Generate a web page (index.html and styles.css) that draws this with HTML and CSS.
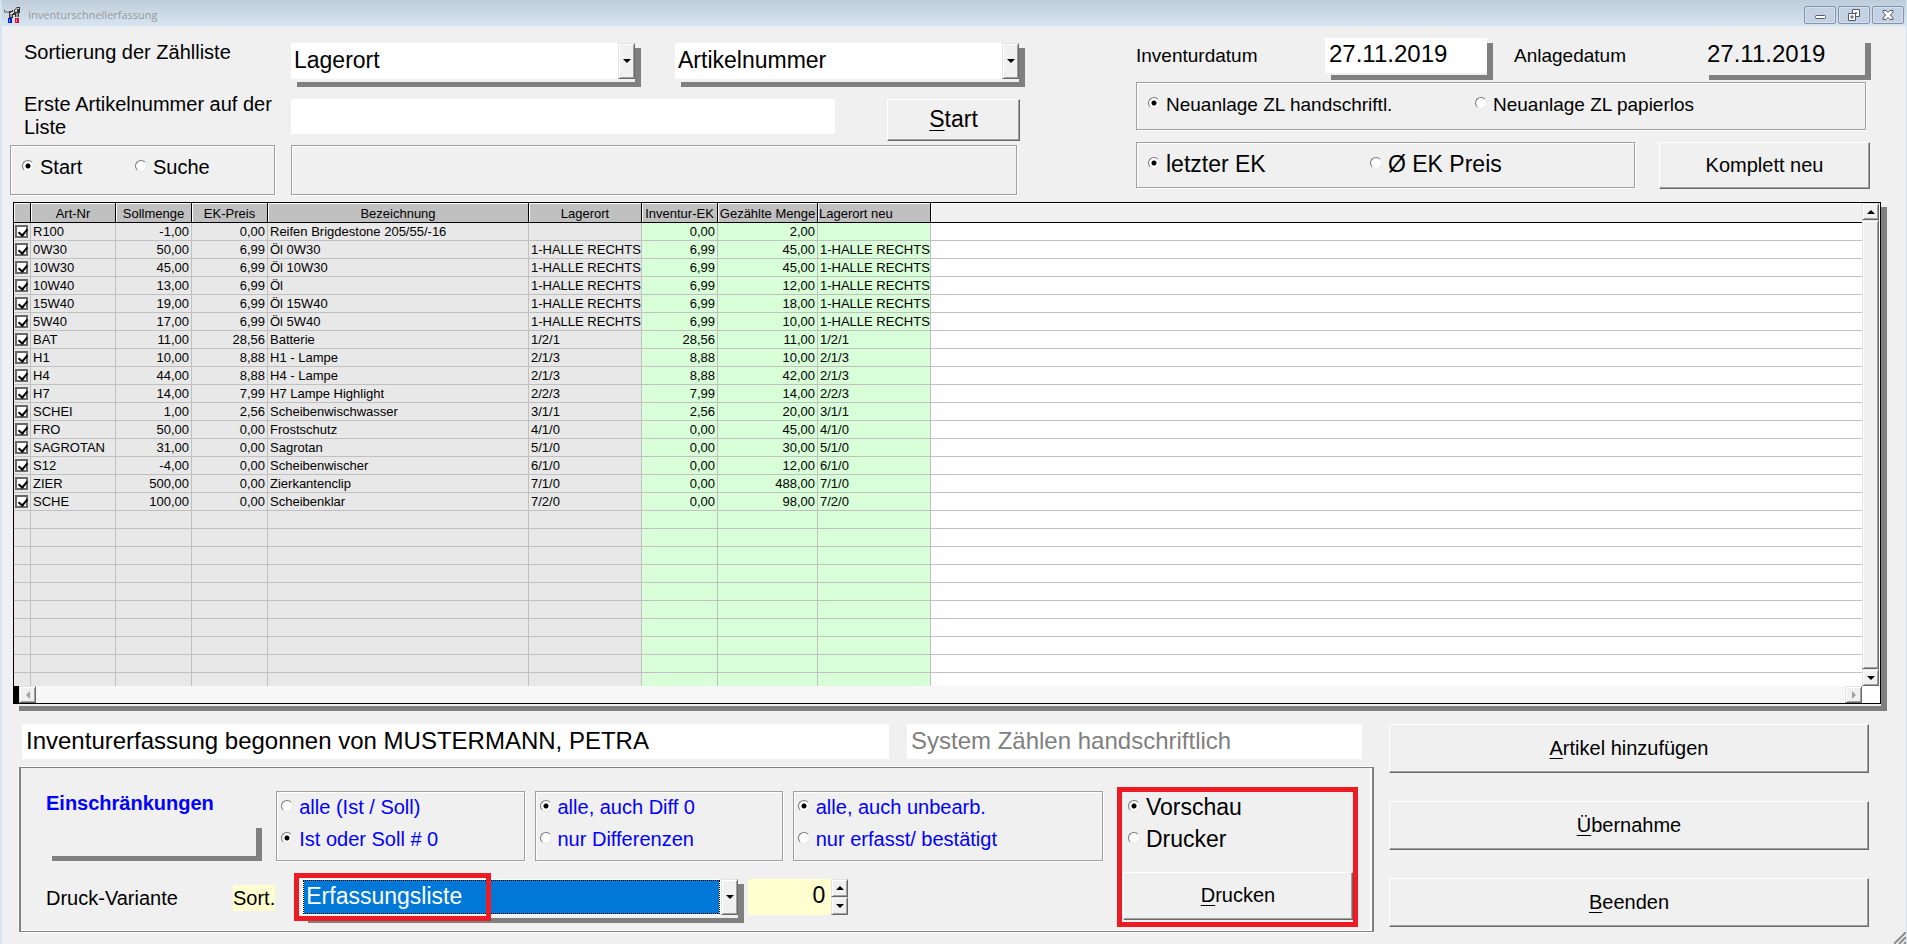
FILE: index.html
```html
<!DOCTYPE html>
<html lang="de">
<head>
<meta charset="utf-8">
<title>Inventurschnellerfassung</title>
<link rel="stylesheet" href="styles.css">
</head>
<body>
<div class="window">
  <header class="titlebar">
    <svg class="app-icon" viewBox="0 0 16 16" width="16" height="16" aria-hidden="true">
      <path d="M0 3h9v2H7v1h3V3l3-3h3v6h-1v4h-4V8H9v3H5V6H0z" fill="#333"/>
      <path d="M1 3h7v1H1zM6 6h3v1H6zM11 3l2-2h2v1h-2v3h-2z" fill="#d4d4d4"/>
      <path d="M0 4h5v2H0zM6 7h2v3H6zM12 6h2v4h-2z" fill="#9a9a9a"/>
      <path d="M4 11h4v5H4z" fill="#0a1bd0"/><path d="M5 12h1v3H5z" fill="#3fa0ff"/>
      <path d="M11 11h4v5h-4z" fill="#e0122a"/><path d="M12 12h1v3h-1z" fill="#ff7f9a"/>
    </svg>
    <h1 class="title">Inventurschnellerfassung</h1>
    <div class="window-buttons">
      <button class="window-button" type="button" aria-label="Minimieren">
        <svg viewBox="0 0 12 12" width="12" height="12"><rect x="1.500" y="6.500" width="10" height="3" rx="1" fill="#fff" stroke="#535666"/></svg>
      </button>
      <button class="window-button" type="button" aria-label="Wiederherstellen">
        <svg viewBox="0 0 12 12" width="12" height="12"><g fill="#fff" stroke="#535666"><path d="M4.500.500h7v7h-7z"/><path d="M7.500 3.500h1v1h-1z"/><path d="M.500 4.500h7v7h-7z"/><path d="M3 7h2v2H3z"/></g></svg>
      </button>
      <button class="window-button" type="button" aria-label="Schließen">
        <svg viewBox="0 0 12 12" width="12" height="12"><path d="M1 1.500h3l2 2 2-2h3v1.500l-2.500 3 2.500 3v1.500H8l-2-2-2 2H1V9l2.500-3L1 3z" fill="#fff" stroke="#535666"/></svg>
      </button>
    </div>
  </header>

  <main class="content">
    <section class="top">
      <div class="top-left">
        <div class="sort-row">
          <label class="caption" for="sort1">Sortierung der Zählliste</label>
          <div class="combo shadowed">
            <select class="combo-field" id="sort1"><option>Lagerort</option></select>
            <span class="combo-arrow" aria-hidden="true"><i class="arrow-down"></i></span>
          </div>
          <div class="combo shadowed">
            <select class="combo-field" id="sort2" aria-label="Zweite Sortierung"><option>Artikelnummer</option></select>
            <span class="combo-arrow" aria-hidden="true"><i class="arrow-down"></i></span>
          </div>
        </div>
        <div class="first-row">
          <label class="caption" for="first">Erste Artikelnummer auf der Liste</label>
          <input class="first-input" id="first" type="text">
          <button class="button start-button" type="button"><span><u>S</u>tart</span></button>
        </div>
        <div class="mode-row">
          <div class="group mode-group" role="radiogroup" aria-label="Modus">
            <label class="radio"><input type="radio" name="mode" checked>Start</label>
            <label class="radio"><input type="radio" name="mode">Suche</label>
          </div>
          <div class="group result-group"></div>
        </div>
      </div>

      <div class="top-right">
        <div class="date-row">
          <label class="date-caption" for="invdate">Inventurdatum</label>
          <div class="date shadowed"><input class="date-input" id="invdate" type="text" value="27.11.2019"></div>
          <label class="date-caption second" for="newdate">Anlagedatum</label>
          <div class="date shadowed"><input class="date-input flat" id="newdate" type="text" value="27.11.2019" readonly></div>
        </div>
        <div class="group create-group" role="radiogroup" aria-label="Neuanlage">
          <label class="radio"><input type="radio" name="create" checked>Neuanlage ZL handschriftl.</label>
          <label class="radio"><input type="radio" name="create">Neuanlage ZL papierlos</label>
        </div>
        <div class="price-row">
          <div class="group price-group" role="radiogroup" aria-label="Preis">
            <label class="radio"><input type="radio" name="price" checked>letzter EK</label>
            <label class="radio"><input type="radio" name="price">Ø EK Preis</label>
          </div>
          <button class="button reset-button" type="button">Komplett neu</button>
        </div>
      </div>
    </section>

    <section class="grid-frame shadowed">
      <div class="grid">
        <div class="grid-main">
          <div class="grid-view">
            <table class="items">
              <colgroup><col class="c-check"><col class="c-art"><col class="c-num"><col class="c-num"><col class="c-name"><col class="c-place"><col class="c-num"><col class="c-count"><col class="c-place"><col></colgroup>
              <thead><tr><th></th><th>Art-Nr</th><th>Sollmenge</th><th>EK-Preis</th><th>Bezeichnung</th><th>Lagerort</th><th>Inventur-EK</th><th>Gezählte Menge</th><th class="left">Lagerort neu</th><th class="rest"></th></tr></thead>
              <tbody>
                <tr><td><input type="checkbox" aria-label="R100" checked></td><td>R100</td><td>-1,00</td><td>0,00</td><td>Reifen Brigdestone 205/55/-16</td><td></td><td>0,00</td><td>2,00</td><td></td><td></td></tr>
                <tr><td><input type="checkbox" aria-label="0W30" checked></td><td>0W30</td><td>50,00</td><td>6,99</td><td>Öl 0W30</td><td>1-HALLE RECHTS</td><td>6,99</td><td>45,00</td><td>1-HALLE RECHTS</td><td></td></tr>
                <tr><td><input type="checkbox" aria-label="10W30" checked></td><td>10W30</td><td>45,00</td><td>6,99</td><td>Öl 10W30</td><td>1-HALLE RECHTS</td><td>6,99</td><td>45,00</td><td>1-HALLE RECHTS</td><td></td></tr>
                <tr><td><input type="checkbox" aria-label="10W40" checked></td><td>10W40</td><td>13,00</td><td>6,99</td><td>Öl</td><td>1-HALLE RECHTS</td><td>6,99</td><td>12,00</td><td>1-HALLE RECHTS</td><td></td></tr>
                <tr><td><input type="checkbox" aria-label="15W40" checked></td><td>15W40</td><td>19,00</td><td>6,99</td><td>Öl 15W40</td><td>1-HALLE RECHTS</td><td>6,99</td><td>18,00</td><td>1-HALLE RECHTS</td><td></td></tr>
                <tr><td><input type="checkbox" aria-label="5W40" checked></td><td>5W40</td><td>17,00</td><td>6,99</td><td>Öl 5W40</td><td>1-HALLE RECHTS</td><td>6,99</td><td>10,00</td><td>1-HALLE RECHTS</td><td></td></tr>
                <tr><td><input type="checkbox" aria-label="BAT" checked></td><td>BAT</td><td>11,00</td><td>28,56</td><td>Batterie</td><td>1/2/1</td><td>28,56</td><td>11,00</td><td>1/2/1</td><td></td></tr>
                <tr><td><input type="checkbox" aria-label="H1" checked></td><td>H1</td><td>10,00</td><td>8,88</td><td>H1 - Lampe</td><td>2/1/3</td><td>8,88</td><td>10,00</td><td>2/1/3</td><td></td></tr>
                <tr><td><input type="checkbox" aria-label="H4" checked></td><td>H4</td><td>44,00</td><td>8,88</td><td>H4 - Lampe</td><td>2/1/3</td><td>8,88</td><td>42,00</td><td>2/1/3</td><td></td></tr>
                <tr><td><input type="checkbox" aria-label="H7" checked></td><td>H7</td><td>14,00</td><td>7,99</td><td>H7 Lampe Highlight</td><td>2/2/3</td><td>7,99</td><td>14,00</td><td>2/2/3</td><td></td></tr>
                <tr><td><input type="checkbox" aria-label="SCHEI" checked></td><td>SCHEI</td><td>1,00</td><td>2,56</td><td>Scheibenwischwasser</td><td>3/1/1</td><td>2,56</td><td>20,00</td><td>3/1/1</td><td></td></tr>
                <tr><td><input type="checkbox" aria-label="FRO" checked></td><td>FRO</td><td>50,00</td><td>0,00</td><td>Frostschutz</td><td>4/1/0</td><td>0,00</td><td>45,00</td><td>4/1/0</td><td></td></tr>
                <tr><td><input type="checkbox" aria-label="SAGROTAN" checked></td><td>SAGROTAN</td><td>31,00</td><td>0,00</td><td>Sagrotan</td><td>5/1/0</td><td>0,00</td><td>30,00</td><td>5/1/0</td><td></td></tr>
                <tr><td><input type="checkbox" aria-label="S12" checked></td><td>S12</td><td>-4,00</td><td>0,00</td><td>Scheibenwischer</td><td>6/1/0</td><td>0,00</td><td>12,00</td><td>6/1/0</td><td></td></tr>
                <tr><td><input type="checkbox" aria-label="ZIER" checked></td><td>ZIER</td><td>500,00</td><td>0,00</td><td>Zierkantenclip</td><td>7/1/0</td><td>0,00</td><td>488,00</td><td>7/1/0</td><td></td></tr>
                <tr><td><input type="checkbox" aria-label="SCHE" checked></td><td>SCHE</td><td>100,00</td><td>0,00</td><td>Scheibenklar</td><td>7/2/0</td><td>0,00</td><td>98,00</td><td>7/2/0</td><td></td></tr>
                <tr><td></td><td></td><td></td><td></td><td></td><td></td><td></td><td></td><td></td><td></td></tr>
                <tr><td></td><td></td><td></td><td></td><td></td><td></td><td></td><td></td><td></td><td></td></tr>
                <tr><td></td><td></td><td></td><td></td><td></td><td></td><td></td><td></td><td></td><td></td></tr>
                <tr><td></td><td></td><td></td><td></td><td></td><td></td><td></td><td></td><td></td><td></td></tr>
                <tr><td></td><td></td><td></td><td></td><td></td><td></td><td></td><td></td><td></td><td></td></tr>
                <tr><td></td><td></td><td></td><td></td><td></td><td></td><td></td><td></td><td></td><td></td></tr>
                <tr><td></td><td></td><td></td><td></td><td></td><td></td><td></td><td></td><td></td><td></td></tr>
                <tr><td></td><td></td><td></td><td></td><td></td><td></td><td></td><td></td><td></td><td></td></tr>
                <tr><td></td><td></td><td></td><td></td><td></td><td></td><td></td><td></td><td></td><td></td></tr>
                <tr><td></td><td></td><td></td><td></td><td></td><td></td><td></td><td></td><td></td><td></td></tr>
              </tbody>
            </table>
          </div>
          <div class="vscroll" aria-hidden="true">
            <span class="scroll-end"><i class="arrow-up"></i></span>
            <span class="thumb"></span>
            <span class="scroll-end"><i class="arrow-down"></i></span>
          </div>
        </div>
        <div class="hscroll" aria-hidden="true">
          <span class="splitter"></span>
          <span class="scroll-end"><i class="arrow-left"></i></span>
          <span class="track"></span>
          <span class="scroll-end"><i class="arrow-right"></i></span>
          <span class="corner"></span>
        </div>
      </div>
    </section>

    <section class="bottom">
      <div class="bottom-left">
        <div class="status-row">
          <output class="status status-main">Inventurerfassung begonnen von MUSTERMANN, PETRA</output>
          <output class="status status-side">System Zählen handschriftlich</output>
        </div>
        <div class="panel">
          <div class="filters">
            <div class="filter-row">
              <div class="limits">
                <h2 class="limits-title">Einschränkungen</h2>
                <div class="limits-box shadowed"></div>
              </div>
              <div class="group filter-group" role="radiogroup" aria-label="Ist / Soll">
                <label class="radio"><input type="radio" name="f1">alle (Ist / Soll)</label>
                <label class="radio"><input type="radio" name="f1" checked>Ist oder Soll # 0</label>
              </div>
              <div class="group filter-group" role="radiogroup" aria-label="Differenzen">
                <label class="radio"><input type="radio" name="f2" checked>alle, auch Diff 0</label>
                <label class="radio"><input type="radio" name="f2">nur Differenzen</label>
              </div>
              <div class="group filter-group wide" role="radiogroup" aria-label="Bearbeitung">
                <label class="radio"><input type="radio" name="f3" checked>alle, auch unbearb.</label>
                <label class="radio"><input type="radio" name="f3">nur erfasst/ bestätigt</label>
              </div>
            </div>
            <div class="variant-row">
              <label class="variant-caption" for="variant">Druck-Variante</label>
              <label class="sort-caption" for="sortno">Sort.</label>
              <div class="combo variant-combo shadowed">
                <select class="combo-field selected" id="variant"><option>Erfassungsliste</option></select>
                <span class="combo-arrow" aria-hidden="true"><i class="arrow-down"></i></span>
                <span class="marker" aria-hidden="true"></span>
              </div>
              <div class="spinner">
                <input class="spinner-input" id="sortno" type="text" value="0">
                <div class="spinner-buttons">
                  <button class="spin" type="button" aria-label="Mehr"><i class="arrow-up"></i></button>
                  <button class="spin" type="button" aria-label="Weniger"><i class="arrow-down"></i></button>
                </div>
              </div>
            </div>
          </div>
          <div class="print-box">
            <label class="radio"><input type="radio" name="out" checked>Vorschau</label>
            <label class="radio"><input type="radio" name="out">Drucker</label>
            <button class="button print-button" type="button"><span><u>D</u>rucken</span></button>
          </div>
        </div>
      </div>
      <div class="actions">
        <button class="button action" type="button"><span><u>A</u>rtikel hinzufügen</span></button>
        <button class="button action" type="button"><span><u>Ü</u>bernahme</span></button>
        <button class="button action" type="button"><span><u>B</u>eenden</span></button>
      </div>
    </section>
  </main>
  <svg class="grip" viewBox="0 0 12 12" width="12" height="12" aria-hidden="true"><path d="M0 12L12 0M5 12l7-7M10 12l2-2" stroke="#8c8c8c" stroke-width="2"/></svg>
</div>
</body>
</html>
```

FILE: styles.css
```css
* { box-sizing: border-box; }

body {
  margin: 0;
  background: #f0f0f0;
  color: #000;
  font-family: "Liberation Sans", Arial, sans-serif;
  font-size: 20px;
  line-height: 23px;
}

input, select, button { font: inherit; color: inherit; margin: 0; border-radius: 0; }

.window {
  position: relative;
  display: flex;
  flex-direction: column;
  height: 100vh;
  min-height: 760px;
  overflow: hidden;
  border-left: 2px solid #d6e4f2;
  border-right: 1px solid #d6e4f2;
}

/* title bar */
.titlebar {
  display: flex;
  align-items: center;
  flex: none;
  height: 26px;
  padding: 3px 2px 0;
  background: linear-gradient(#bfcddb, #d7e4f2);
}
.app-icon { margin: 0 8px 0 0; }
.title {
  flex: 1;
  margin: 0;
  font: 11px/16px "Open Sans", "Noto Sans", sans-serif;
  color: #999;
}
.window-buttons { display: flex; gap: 2px; }
.window-button {
  display: flex;
  align-items: center;
  justify-content: center;
  width: 32px;
  height: 18px;
  padding: 0;
  border: 1px solid #8592ad;
  border-radius: 2px;
  background: #c3d1e2;
  box-shadow: inset 0 0 0 1px #d5e0ee;
}

.content {
  display: flex;
  flex-direction: column;
  flex: 1;
  min-height: 0;
}

/* shared controls */
.shadowed {
  background: #f0f0f0;
  box-shadow: 6px 5px 0 #808080;
}

.button {
  padding: 0 0 1px;
  background: #f0f0f0;
  border: 1px solid;
  border-color: #fff #696969 #696969 #fff;
  box-shadow: inset -1px -1px 0 #a0a0a0;
}
.button u { text-underline-offset: 3px; text-decoration-thickness: 1px; }

.group {
  display: flex;
  border: 1px solid #a0a0a0;
  box-shadow: 1px 1px 0 #fff, inset 1px 1px 0 #fff;
}

.radio {
  display: flex;
  align-items: center;
  gap: 6px;
  white-space: nowrap;
}
.radio input {
  appearance: none;
  flex: none;
  width: 12px;
  height: 12px;
  margin-bottom: 3px;
  border: 1px solid;
  border-color: #777 #e8e8e8 #e8e8e8 #777;
  border-radius: 50%;
  background: #fff;
}
.radio input:checked { background: radial-gradient(circle, #000 2px, #fff 3px); }

.combo { display: flex; padding-bottom: 3px; }
.combo-field {
  appearance: none;
  flex: 1;
  min-width: 0;
  height: 36px;
  padding: 0 3px 2px;
  border: 0;
  background: #fff;
  font-size: 23px;
  line-height: 32px;
}
.combo-arrow, .scroll-end, .spin {
  display: flex;
  align-items: center;
  justify-content: center;
  flex: none;
  background: #f0f0f0;
  border: 1px solid;
  border-color: #e3e3e3 #696969 #696969 #e3e3e3;
  box-shadow: inset 1px 1px 0 #fff, inset -1px -1px 0 #a0a0a0;
}
.combo-arrow { width: 17px; }

.arrow-up, .arrow-down, .arrow-left, .arrow-right { border: 4px solid transparent; }
.arrow-up { border-top: 0; border-bottom-color: #000; }
.arrow-down { border-bottom: 0; border-top-color: #000; }
.arrow-left { border-left: 0; border-right-color: #a0a0a0; }
.arrow-right { border-right: 0; border-left-color: #a0a0a0; }

/* upper controls */
.top {
  display: grid;
  grid-template-columns: 1010fr 735fr;
  column-gap: 116px;
  flex: none;
  padding: 12px 35px 7px 8px;
}
.top-left { padding-top: 3px; }
.caption { flex: 0 1 267px; }
.sort-row, .first-row, .mode-row { display: flex; align-items: flex-start; }
.sort-row { height: 52px; padding: 0 1px 0 14px; }
.sort-row .combo { flex: 1 1 344px; margin-top: 2px; }
.sort-row .combo + .combo { margin-left: 40px; }
.first-row { height: 52px; padding-left: 14px; }
.first-input {
  flex: 1 1 544px;
  min-width: 0;
  height: 35px;
  margin-top: 6px;
  padding: 0 4px;
  border: 0;
  background: #fff;
}
.start-button { flex: 0 1 133px; height: 42px; margin: 6px 0 0 52px; font-size: 23px; }
.mode-row { gap: 16px; padding-right: 3px; }
.mode-group { flex: 0 1 265px; height: 50px; gap: 32px; padding: 0 0 5px 11px; }
.mode-group .radio { flex: 0 0 81px; }
.result-group { flex: 1; height: 50px; }

.date-row { display: flex; height: 44px; padding-right: 6px; }
.date-caption { flex: 0 1 189px; padding-top: 6px; font-size: 19px; }
.date-caption.second { margin-left: 27px; }
.date { flex: 1 1 162px; height: 37px; }
.date-input {
  display: block;
  width: 100%;
  height: 35px;
  padding: 0 4px 3px;
  border: 0;
  background: #fff;
  font-size: 24px;
}
.date-input.flat { background: #f0f0f0; }
.create-group { height: 48px; margin-right: 5px; padding: 0 0 4px 11px; font-size: 19px; }
.create-group .radio { flex: 0 0 327px; }
.price-row { display: flex; gap: 24px; margin-top: 12px; padding-right: 1px; }
.price-group { flex: 1 1 499px; height: 46px; padding: 0 0 2px 11px; font-size: 23px; }
.price-group .radio { flex: 0 0 222px; }
.reset-button { flex: 0 1 211px; height: 47px; }

/* item grid */
.grid-frame {
  flex: 1;
  min-height: 0;
  margin: 0 25px 0 11px;
  padding-bottom: 2px;
}
.grid {
  display: flex;
  flex-direction: column;
  height: 100%;
  border: 1px solid #000;
}
.grid-main { display: flex; flex: 1; min-height: 0; }
.grid-view { flex: 1; min-width: 0; overflow: hidden; background: #fff; }

.items {
  width: 100%;
  table-layout: fixed;
  border-collapse: separate;
  border-spacing: 0;
  font-size: 13px;
  line-height: 17px;
}
.c-check { width: 17px; }
.c-art { width: 85px; }
.c-num { width: 76px; }
.c-name { width: 261px; }
.c-place { width: 113px; }
.c-count { width: 100px; }

.items th {
  height: 20px;
  padding: 2px 0 0;
  overflow: hidden;
  white-space: nowrap;
  font-weight: normal;
  background: #c0c0c0;
  border: solid #000;
  border-width: 0 1px 1px 0;
  box-shadow: inset 1px 1px 0 #fff;
}
.items th.left { text-align: left; padding-left: 1px; }
.items th.rest { background: #f0f0f0; border-right: 0; }

.items td {
  height: 18px;
  padding: 0 2px;
  overflow: hidden;
  white-space: nowrap;
  background: #e8e8e8;
  border: solid #c0c0c0;
  border-width: 0 1px 1px 0;
}
.items td:nth-child(1) { padding: 0 1px; }
.items td:nth-child(3), .items td:nth-child(4),
.items td:nth-child(7), .items td:nth-child(8) { text-align: right; }
.items td:nth-child(n+7) { background: #d8ffd8; }
.items td:nth-child(10) { background: #fff; border-right: 0; }

.items input {
  appearance: none;
  display: block;
  width: 13px;
  height: 13px;
  border: 2px solid #696969;
  background: #fff;
}
.items input:checked::before {
  content: "";
  display: block;
  width: 4px;
  height: 7px;
  margin-left: 3px;
  border: solid #000;
  border-width: 0 2px 2px 0;
  transform: rotate(40deg);
}

.vscroll {
  display: flex;
  flex-direction: column;
  flex: 0 0 18px;
  padding-right: 1px;
  background: #fff;
}
.vscroll .scroll-end { height: 17px; }
.thumb {
  flex: 1;
  background: #f0f0f0;
  border: 1px solid;
  border-color: #e3e3e3 #696969 #696969 #e3e3e3;
  box-shadow: inset 1px 1px 0 #fff, inset -1px -1px 0 #a0a0a0;
}
.hscroll { display: flex; flex: 0 0 17px; }
.hscroll .scroll-end { width: 17px; }
.splitter { width: 5px; background: #000; }
.track { flex: 1; background: repeating-conic-gradient(#f0f0f0 0 25%, #fff 0 50%) 0 0 / 2px 2px; }
.corner { width: 18px; background: #fff; }

/* lower part */
.bottom {
  display: grid;
  grid-template-columns: 1356fr 481fr;
  column-gap: 15px;
  flex: none;
  padding: 18px 36px 12px 16px;
}
.status-row { display: flex; gap: 18px; padding: 0 12px 0 4px; }
.status {
  height: 35px;
  padding: 5px 4px 0;
  overflow: hidden;
  white-space: nowrap;
  background: #fff;
  font-size: 24px;
}
.status-main { flex: 1 1 867px; }
.status-side { flex: 1 1 455px; color: #808080; }

.panel {
  display: flex;
  gap: 14px;
  margin: 8px 0 0 1px;
  padding: 19px 14px 4px 25px;
  border: solid #808080;
  border-width: 1px 2px 1px 2px;
  box-shadow: -1px -1px 0 #fff, 0 1px 0 #fff, inset -2px -1px 0 #fff;
}
.filters { flex: 1 1 1056px; min-width: 0; }
.filter-row { display: flex; gap: 10px; padding-top: 4px; }
.limits { flex: 1 1 220px; padding-right: 10px; }
.limits-title { margin: 1px 0 8px; font-size: 20px; line-height: 23px; color: #00f; }
.limits-box { height: 33px; }
.filter-group {
  flex: 1 1 248px;
  flex-direction: column;
  gap: 9px;
  height: 70px;
  padding: 4px 0 0 4px;
  color: #00f;
}
.filter-group.wide { flex-basis: 310px; }

.variant-row { display: flex; align-items: flex-start; margin-top: 18px; }
.variant-caption { flex: 0 0 187px; padding-top: 8px; }
.sort-caption { padding: 2px 0 1px; margin: 6px 27px 0 0; background: #ffffd0; }
.variant-combo { position: relative; flex: 0 1 436px; }
.combo-field.selected {
  padding: 0 2px 3px;
  background: #0078d7;
  color: #fff;
  line-height: 30px;
  outline: 1px dotted #000;
  outline-offset: -2px;
  border: solid #fff;
  border-width: 1px 2px 1px 2px;
}
.marker {
  position: absolute;
  left: -8px;
  top: -6px;
  width: 197px;
  height: 48px;
  border: 5px solid #ed1c24;
}
.spinner { display: flex; margin-left: 10px; }
.spinner-input {
  width: 83px;
  height: 36px;
  padding: 0 6px 3px;
  border: 0;
  background: #ffffd0;
  font-size: 23px;
  text-align: right;
}
.spinner-buttons { display: flex; flex-direction: column; width: 17px; }
.spin { flex: 1; padding: 0; }

.print-box {
  display: flex;
  flex-direction: column;
  flex: 0 1 241px;
  gap: 9px;
  height: 140px;
  padding: 4px 0 2px 1px;
  border: 5px solid #ed1c24;
  font-size: 23px;
}
.print-box .radio { padding-left: 5px; }
.print-button { height: 48px; margin-top: auto; font-size: 20px; }

.actions { display: flex; flex-direction: column; gap: 28px; padding-right: 1px; }
.action { height: 49px; }

.grip { position: absolute; right: 0; bottom: 0; }
```
